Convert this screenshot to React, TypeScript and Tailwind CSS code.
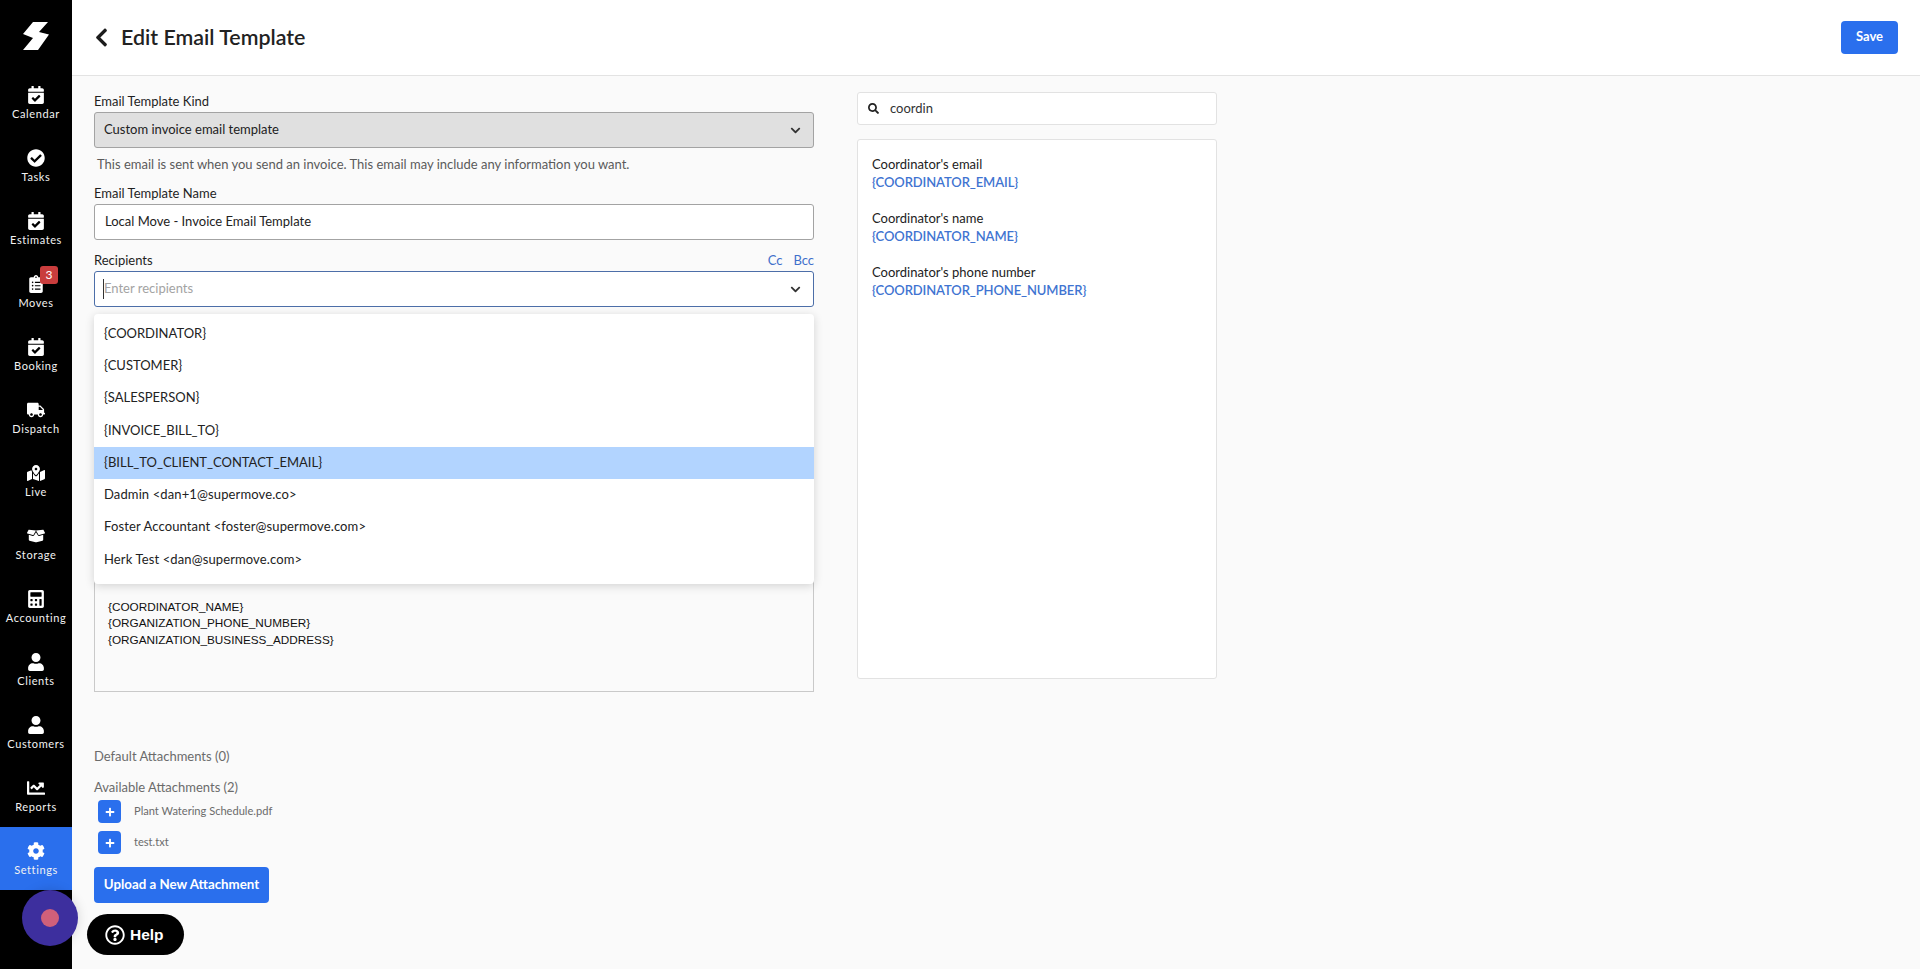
import React from "react";
import {
  FaCalendarCheck, FaCheckCircle, FaClipboardList, FaTruck, FaMapMarkedAlt, FaBoxOpen, FaCalculator,
  FaUser, FaChartLine, FaCog, FaChevronLeft, FaChevronDown, FaSearch, FaPlus, FaRegQuestionCircle,
} from "react-icons/fa";

const nav = [
  { label: "Calendar", Icon: FaCalendarCheck },
  { label: "Tasks", Icon: FaCheckCircle },
  { label: "Estimates", Icon: FaCalendarCheck },
  { label: "Moves", Icon: FaClipboardList, badge: "3" },
  { label: "Booking", Icon: FaCalendarCheck },
  { label: "Dispatch", Icon: FaTruck },
  { label: "Live", Icon: FaMapMarkedAlt },
  { label: "Storage", Icon: FaBoxOpen },
  { label: "Accounting", Icon: FaCalculator },
  { label: "Clients", Icon: FaUser },
  { label: "Customers", Icon: FaUser },
  { label: "Reports", Icon: FaChartLine },
  { label: "Settings", Icon: FaCog, active: true },
];

const options = [
  "{COORDINATOR}", "{CUSTOMER}", "{SALESPERSON}", "{INVOICE_BILL_TO}", "{BILL_TO_CLIENT_CONTACT_EMAIL}",
  "Dadmin <dan+1@supermove.co>", "Foster Accountant <foster@supermove.com>", "Herk Test <dan@supermove.com>",
];

const vars = [
  ["Coordinator's email", "{COORDINATOR_EMAIL}"],
  ["Coordinator's name", "{COORDINATOR_NAME}"],
  ["Coordinator's phone number", "{COORDINATOR_PHONE_NUMBER}"],
];

function Label({ children }: { children: React.ReactNode }) {
  return <div className="h-[21px] text-[13px] leading-[20px] text-[#1f1f1f]">{children}</div>;
}

export default function App() {
  return (
    <div className="relative flex h-screen overflow-hidden bg-[#fafafa] font-['Lato','Liberation_Sans',sans-serif]">
      <aside className="flex w-[72px] shrink-0 flex-col bg-black text-white">
        <div className="flex h-[71px] items-center justify-center">
          <svg width="28" height="30" viewBox="0 0 28 30" fill="#fff">
            <polygon points="11,1 26,1 17,11 27,13.5 16,29 1,29 11,17 1,13" />
          </svg>
        </div>
        {nav.map(({ label, Icon, badge, active }) => (
          <div key={label} className={`relative flex h-[63px] flex-col items-center pt-[14px] ${active ? "bg-[#2a6fed]" : ""}`}>
            <div className="flex h-[20px] items-center justify-center">
              <Icon className="text-[18px]" />
            </div>
            <div className="mt-[1px] text-[11px] leading-[16px] tracking-[0.6px] text-[#f2f2f2]">{label}</div>
            {badge && (
              <div className="absolute left-[40px] top-[6px] flex h-[18px] w-[18px] items-center justify-center rounded-[3px] bg-[#c93d3d] text-[12px] leading-none text-white">
                {badge}
              </div>
            )}
          </div>
        ))}
      </aside>

      <main className="flex min-w-0 flex-1 flex-col">
        <header className="flex h-[76px] shrink-0 items-center justify-between border-b border-[#e3e3e3] bg-white pl-[22px] pr-[22px]">
          <div className="flex items-center">
            <FaChevronLeft className="-ml-[3px] text-[21px] text-[#1c1c1c]" />
            <h1 className="ml-[9px] text-[21.4px] font-semibold leading-none text-[#222222]">Edit Email Template</h1>
          </div>
          <button className="mb-[1px] h-[33px] w-[57px] rounded-[4px] bg-[#2a6fed] text-[13px] font-bold text-white">Save</button>
        </header>

        <div className="flex gap-[43px] pl-[22px]">
          <section className="w-[720px] pt-[15px]">
            <Label>Email Template Kind</Label>
            <div className="flex h-[36px] items-center justify-between rounded-[3px] border border-[#a3a3a3] bg-[#e0e0e0] pl-[9px] pr-[12px] text-[13px] text-[#222222]">
              <span>Custom invoice email template</span>
              <FaChevronDown className="text-[11px] text-[#333333]" />
            </div>
            <div className="mt-[6px] h-[20px] pl-[3px] text-[13px] leading-[20px] text-[#5a5a5a]">
              This email is sent when you send an invoice. This email may include any information you want.
            </div>
            <div className="mt-[9px]"><Label>Email Template Name</Label></div>
            <div className="flex h-[36px] items-center rounded-[3px] border border-[#a3a3a3] bg-white pl-[10px] text-[13px] text-[#222222]">
              Local Move - Invoice Email Template
            </div>
            <div className="relative mt-[10px]">
              <div className="flex items-center justify-between">
                <Label>Recipients</Label>
                <div className="flex gap-[11px] pb-[1px] text-[13px] leading-[20px] text-[#3f6fcb]">
                  <span>Cc</span>
                  <span>Bcc</span>
                </div>
              </div>
              <div className="flex h-[36px] items-center justify-between rounded-[3px] border border-[#4c6ea8] bg-white pl-[8px] pr-[12px] text-[13px]">
                <span className="border-l border-[#333333] text-[#a3a3a3]">Enter recipients</span>
                <FaChevronDown className="text-[11px] text-[#333333]" />
              </div>
              <div className="absolute left-0 right-0 top-[64px] z-10 h-[270px] rounded-[4px] bg-white pt-[4px] shadow-[0_2px_10px_rgba(0,0,0,0.16)]">
                {options.map((o, i) => (
                  <div key={o} className={`flex h-[32.25px] items-center pb-[1px] pl-[10px] text-[13px] text-[#222222] ${i === 4 ? "bg-[#b2d4ff]" : ""} ${i > 4 ? "tracking-[0.12px]" : ""}`}>
                    {o}
                  </div>
                ))}
              </div>
            </div>
            <div className="mt-[23px] flex h-[362px] flex-col justify-end border border-[#c9c9c9] pb-[43px] pl-[13px] font-['Liberation_Sans',sans-serif] text-[11.75px] leading-[16.5px] text-[#111111]">
              <div>{"{COORDINATOR_NAME}"}</div>
              <div>{"{ORGANIZATION_PHONE_NUMBER}"}</div>
              <div>{"{ORGANIZATION_BUSINESS_ADDRESS}"}</div>
            </div>
            <div className="mt-[54px] h-[20px] text-[13px] leading-[20px] text-[#6b6b6b]">Default Attachments (0)</div>
            <div className="mt-[11px] h-[20px] text-[13px] leading-[20px] text-[#6b6b6b]">Available Attachments (2)</div>
            <div className="mt-[3px] flex h-[23px] items-center pl-[4px]">
              <span className="flex h-[23px] w-[23px] items-center justify-center rounded-[4px] bg-[#2a6fed] text-[10px] text-white"><FaPlus /></span>
              <span className="mb-[1px] ml-[13px] text-[11.1px] text-[#6b6b6b]">Plant Watering Schedule.pdf</span>
            </div>
            <div className="mt-[8px] flex h-[23px] items-center pl-[4px]">
              <span className="flex h-[23px] w-[23px] items-center justify-center rounded-[4px] bg-[#2a6fed] text-[10px] text-white"><FaPlus /></span>
              <span className="ml-[13px] text-[11.1px] text-[#6b6b6b]">test.txt</span>
            </div>
            <button className="mt-[13px] h-[36px] w-[175px] rounded-[4px] bg-[#2a6fed] text-[13.3px] font-bold text-white">Upload a New Attachment</button>
          </section>

          <section className="w-[360px] pt-[16px]">
            <div className="flex h-[33px] items-center rounded-[3px] border border-[#e2e2e2] bg-white pl-[10px] text-[13px] text-[#333333]">
              <FaSearch className="text-[11px] text-[#222222]" />
              <span className="ml-[11px] mt-[1px]">coordin</span>
            </div>
            <div className="mt-[14px] h-[540px] rounded-[3px] border border-[#e2e2e2] bg-white pl-[14px] pt-[15px]">
              {vars.map(([a, b]) => (
                <div key={b} className="mb-[18px] text-[13px] leading-[18px]">
                  <div className="text-[#222222]">{a}</div>
                  <div className="font-semibold tracking-[-0.1px] text-[#3f74d1]">{b}</div>
                </div>
              ))}
            </div>
          </section>
        </div>
      </main>

      <div className="absolute left-[22px] top-[890px] flex h-[56px] w-[56px] items-center justify-center rounded-full bg-[#3d2f9e] shadow-[0_0_12px_rgba(0,0,0,0.15)]">
        <div className="h-[18px] w-[18px] rounded-full bg-[#d0607a]" />
      </div>
      <button className="absolute left-[87px] top-[914px] flex h-[41px] w-[97px] items-center justify-start gap-[5px] rounded-full bg-black pl-[18px] font-['Liberation_Sans',sans-serif] text-[15.5px] font-bold text-white">
        <FaRegQuestionCircle className="text-[20px]" />
        Help
      </button>
    </div>
  );
}
